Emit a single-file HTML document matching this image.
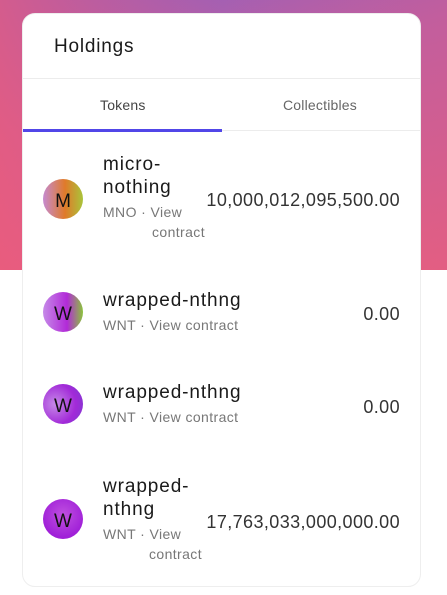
<!DOCTYPE html>
<html><head><style>
*{margin:0;padding:0;box-sizing:border-box}
body{width:447px;height:595px;position:relative;overflow:hidden;background:#fff;font-family:"Liberation Sans",sans-serif}
.bg{position:absolute;left:0;top:0;width:447px;height:270px;background:linear-gradient(165deg,#8f5fc0 0%,#c060a0 35%,#ee5f7a 100%);}
.bg2{position:absolute;left:0;top:0;width:447px;height:270px;background:linear-gradient(90deg,rgba(240,90,120,.7) 0%,rgba(240,90,120,0) 50%,rgba(200,90,150,.3) 100%)}
.card{position:absolute;left:22px;top:13px;width:399px;height:574px;background:#fff;border-radius:13px;border:1px solid #eee;overflow:hidden}
.a{position:absolute;white-space:nowrap}
.t{font-size:19px;color:#1a1a1a;letter-spacing:.8px}
.hr{position:absolute;left:0;width:399px;height:1px;background:#ececec}
.tab{font-size:14px;color:#444;letter-spacing:.2px}
.av{position:absolute;left:20px;width:40px;height:40px;border-radius:50%;font-size:19px;color:#111;text-align:center;line-height:46px}
.nm{font-size:19px;color:#1a1a1a;line-height:23px;font-weight:500;letter-spacing:.9px}
.sb{font-size:14px;color:#777;line-height:20px;letter-spacing:.4px}
.amt{font-size:18px;color:#333;right:20px;letter-spacing:.4px}
</style></head><body>
<div class="bg"></div><div class="bg2"></div>
<div class="card">
<div class="a t" style="left:31px;top:22px">Holdings</div>
<div class="hr" style="top:64px"></div>
<div class="a tab" style="left:77px;top:83px">Tokens</div>
<div class="a tab" style="left:260px;top:83px;color:#666">Collectibles</div>
<div class="hr" style="top:116px"></div>
<div style="position:absolute;left:0;top:115px;width:199px;height:3px;background:#5146e8"></div>

<div class="av" style="top:165px;background:linear-gradient(90deg,#c58ad0,#e07a2a 55%,#a9c43a)">M</div>
<div class="a nm" style="left:80px;top:139px">micro-<br>nothing</div>
<div class="a sb" style="left:80px;top:188px">MNO · View<br><span style="padding-left:49px">contract</span></div>
<div class="a amt" style="top:176px">10,000,012,095,500.00</div>

<div class="av" style="top:278px;background:linear-gradient(90deg,#c58ae8,#b22ad8 60%,#8ac43a)">W</div>
<div class="a nm" style="left:80px;top:275px">wrapped-nthng</div>
<div class="a sb" style="left:80px;top:301px">WNT · View contract</div>
<div class="a amt" style="top:290px">0.00</div>

<div class="av" style="top:370px;background:radial-gradient(circle at 30% 50%,#c68ae8,#a22ad8 60%,#7a3ad0)">W</div>
<div class="a nm" style="left:80px;top:367px">wrapped-nthng</div>
<div class="a sb" style="left:80px;top:393px">WNT · View contract</div>
<div class="a amt" style="top:383px">0.00</div>

<div class="av" style="top:485px;background:radial-gradient(circle at 50% 40%,#c050e0,#a020d8 70%)">W</div>
<div class="a nm" style="left:80px;top:461px">wrapped-<br>nthng</div>
<div class="a sb" style="left:80px;top:510px">WNT · View<br><span style="padding-left:46px">contract</span></div>
<div class="a amt" style="top:498px">17,763,033,000,000.00</div>
</div>
</body></html>
